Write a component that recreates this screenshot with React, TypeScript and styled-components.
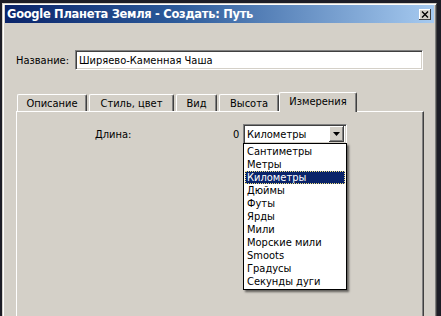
import styled, { createGlobalStyle } from "styled-components";

const GlobalStyle = createGlobalStyle`
  html, body {
    margin: 0;
    padding: 0;
    background: #1d1d26;
    overflow: hidden;
  }
  body {
    font-family: "DejaVu Sans Condensed", "DejaVu Sans", sans-serif;
    font-size: 11px;
    color: #000;
  }
`;

const Window = styled.div`
  margin: 3px 0 0 2px;
  width: 435px;
  height: 313px;
  overflow: hidden;
  background: #d4d0c8;
  box-sizing: border-box;
  border-top: 1px solid #d4d0c8;
  border-left: 1px solid #d4d0c8;
  border-right: 1px solid #404040;
  box-shadow: inset 1px 1px 0 #ffffff, inset -1px 0 0 #808080;
  padding: 1px 2px 0 2px;
`;

const TitleBar = styled.div`
  height: 18px;
  background: linear-gradient(90deg, #0a246a 0%, #2c5a9a 40%, #a6caf0 100%);
  display: flex;
  align-items: center;
  justify-content: space-between;
  padding: 0 2px;
`;

const Title = styled.span`
  color: #fff;
  font-family: "DejaVu Sans", sans-serif;
  font-weight: bold;
  font-size: 11.5px;
  letter-spacing: -0.3px;
  white-space: nowrap;
`;

const CloseButton = styled.div`
  width: 12px;
  height: 11px;
  background: #d4d0c8;
  box-shadow: inset -1px -1px 0 #404040, inset 1px 1px 0 #fff;
  display: flex;
  align-items: center;
  justify-content: center;
  margin-right: 1px;
`;

const Body = styled.div`
  padding: 27px 0 0 11px;
`;

const NameRow = styled.div`
  display: flex;
  align-items: center;
  gap: 6px;
`;

const Label = styled.span`
  white-space: nowrap;
`;

const NameInput = styled.div`
  width: 348px;
  height: 20px;
  box-sizing: border-box;
  background: #fff;
  border-top: 1px solid #808080;
  border-left: 1px solid #808080;
  border-right: 1px solid #fff;
  border-bottom: 1px solid #fff;
  box-shadow: inset 1px 1px 0 #404040, inset -1px -1px 0 #d4d0c8;
  padding: 0 3px;
  display: flex;
  align-items: center;
`;

const TabStrip = styled.div`
  display: flex;
  align-items: flex-end;
  margin-top: 22px;
  padding-left: 1px;
  height: 19px;
`;

const Tab = styled.div<{ $active?: boolean; $w: number }>`
  width: ${({ $w }) => $w}px;
  height: ${({ $active }) => ($active ? 20 : 17)}px;
  box-sizing: border-box;
  background: #d4d0c8;
  border-top: 1px solid #fff;
  border-left: 1px solid #fff;
  border-right: 1px solid #404040;
  box-shadow: inset -1px 0 0 #808080;
  border-radius: 2px 2px 0 0;
  display: flex;
  align-items: center;
  justify-content: center;
  padding-bottom: ${({ $active }) => ($active ? 3 : 0)}px;
  margin: ${({ $active }) => ($active ? "0 -2px -1px -2px" : "0 2px 0 0")};
  position: relative;
  z-index: ${({ $active }) => ($active ? 1 : 0)};
`;

const Panel = styled.div`
  width: 408px;
  height: 220px;
  box-sizing: border-box;
  border-top: 1px solid #fff;
  border-left: 1px solid #fff;
  border-right: 1px solid #404040;
  box-shadow: inset -1px 0 0 #808080;
  padding: 12px 0 0 78px;
`;

const LengthRow = styled.div`
  display: grid;
  grid-template-columns: 134px 6px auto;
  gap: 4px;
  align-items: center;
`;

const Zero = styled.span`
  text-align: right;
`;

const ComboWrap = styled.div`
  position: relative;
  width: 104px;
`;

const Combo = styled.div`
  height: 20px;
  box-sizing: border-box;
  background: #fff;
  border-top: 1px solid #808080;
  border-left: 1px solid #808080;
  border-right: 1px solid #fff;
  border-bottom: 1px solid #fff;
  box-shadow: inset 1px 1px 0 #404040, inset -1px -1px 0 #d4d0c8;
  display: flex;
  align-items: center;
  padding: 2px 2px 2px 3px;
`;

const ComboText = styled.span`
  flex: 1;
`;

const ArrowButton = styled.div`
  width: 15px;
  height: 16px;
  box-sizing: border-box;
  background: #d4d0c8;
  box-shadow: inset -1px -1px 0 #404040, inset 1px 1px 0 #fff,
    inset -2px -2px 0 #808080;
  display: flex;
  align-items: center;
  justify-content: center;
`;

const List = styled.div`
  position: absolute;
  top: 19px;
  left: 0;
  width: 104px;
  box-sizing: border-box;
  background: #fff;
  border: 1px solid #000;
  padding: 1px;
  box-shadow: 2px 2px 2px rgba(0, 0, 0, 0.55);
  z-index: 5;
`;

const Item = styled.div<{ $selected?: boolean }>`
  height: 13px;
  line-height: 13px;
  padding-left: 2px;
  white-space: nowrap;
  background: ${({ $selected }) => ($selected ? "#0a246a" : "transparent")};
  color: ${({ $selected }) => ($selected ? "#fff" : "#000")};
  outline: ${({ $selected }) => ($selected ? "1px dotted #f0e080" : "none")};
  outline-offset: -1px;
`;

const tabs = [
  { label: "Описание", w: 70 },
  { label: "Стиль, цвет", w: 85 },
  { label: "Вид", w: 41 },
  { label: "Высота", w: 60 },
  { label: "Измерения", w: 78, active: true },
];

const units = [
  "Сантиметры",
  "Метры",
  "Километры",
  "Дюймы",
  "Футы",
  "Ярды",
  "Мили",
  "Морские мили",
  "Smoots",
  "Градусы",
  "Секунды дуги",
];

export default function App() {
  return (
    <>
      <GlobalStyle />
      <Window>
        <TitleBar>
          <Title>Google Планета Земля - Создать: Путь</Title>
          <CloseButton>
            <svg width="8" height="7" viewBox="0 0 8 7">
              <path d="M1 0.5 L7 6.5 M7 0.5 L1 6.5" stroke="#000" strokeWidth="1.4" />
            </svg>
          </CloseButton>
        </TitleBar>
        <Body>
          <NameRow>
            <Label>Название:</Label>
            <NameInput>Ширяево-Каменная Чаша</NameInput>
          </NameRow>
          <TabStrip>
            {tabs.map((t) => (
              <Tab key={t.label} $w={t.w} $active={t.active}>
                {t.label}
              </Tab>
            ))}
          </TabStrip>
          <Panel>
            <LengthRow>
              <Label>Длина:</Label>
              <Zero>0</Zero>
              <ComboWrap>
                <Combo>
                  <ComboText>Километры</ComboText>
                  <ArrowButton>
                    <svg width="7" height="4" viewBox="0 0 7 4">
                      <path d="M0 0 H7 L3.5 4 Z" fill="#000" />
                    </svg>
                  </ArrowButton>
                </Combo>
                <List>
                  {units.map((u) => (
                    <Item key={u} $selected={u === "Километры"}>
                      {u}
                    </Item>
                  ))}
                </List>
              </ComboWrap>
            </LengthRow>
          </Panel>
        </Body>
      </Window>
    </>
  );
}
